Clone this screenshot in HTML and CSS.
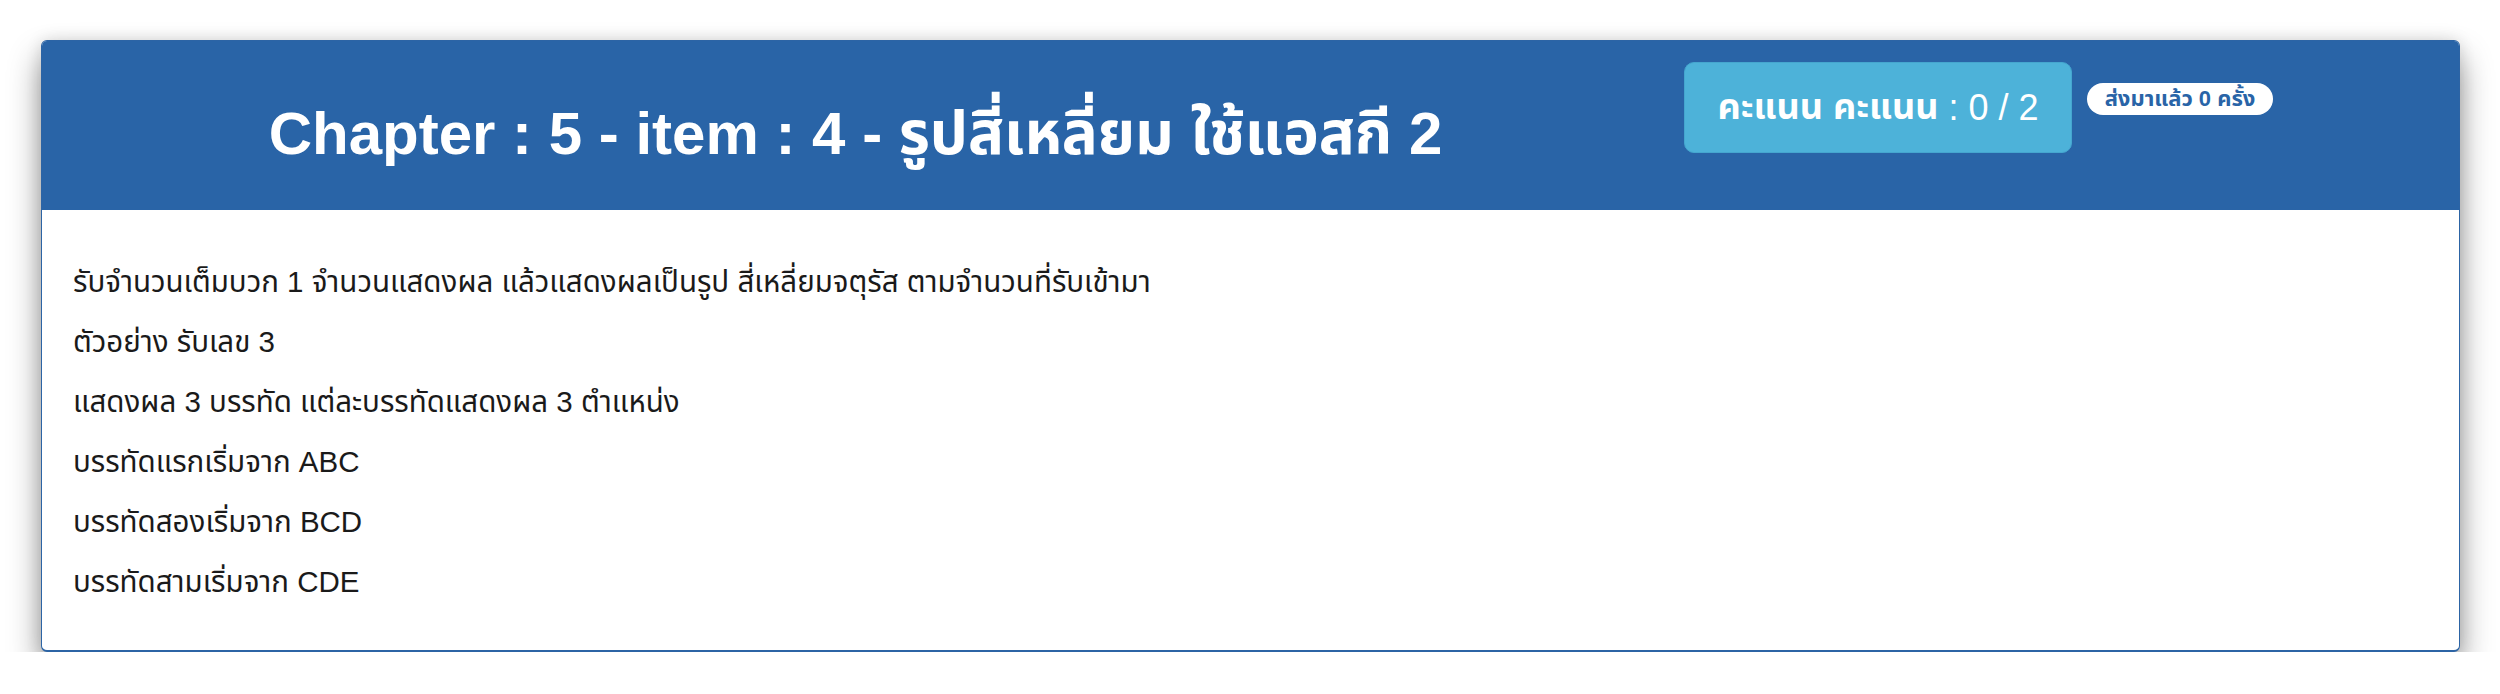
FILE: index.html
```html
<!DOCTYPE html>
<html lang="th">
<head>
<meta charset="utf-8">
<title>Chapter 5 - item 4</title>
<link rel="stylesheet" href="styles.css">
</head>
<body>
<div class="card">
  <div class="card-header">
    <h1 class="title">Chapter : 5 - item : 4 - รูปสี่เหลี่ยม ใช้แอสกี 2</h1>
    <div class="score"><span class="score-label">คะแนน คะแนน</span>&nbsp;: 0 / 2</div>
    <span class="badge">ส่งมาแล้ว 0 ครั้ง</span>
  </div>
  <div class="card-body">
    <p>รับจำนวนเต็มบวก 1 จำนวนแสดงผล แล้วแสดงผลเป็นรูป สี่เหลี่ยมจตุรัส ตามจำนวนที่รับเข้ามา</p>
    <p>ตัวอย่าง รับเลข 3</p>
    <p>แสดงผล 3 บรรทัด แต่ละบรรทัดแสดงผล 3 ตำแหน่ง</p>
    <p>บรรทัดแรกเริ่มจาก ABC</p>
    <p>บรรทัดสองเริ่มจาก BCD</p>
    <p>บรรทัดสามเริ่มจาก CDE</p>
  </div>
</div>
</body>
</html>
```
FILE: styles.css
```css
html, body {
  margin: 0;
  padding: 0;
  background: #ffffff;
}
body {
  padding: 40px 40px 0 41px;
  font-family: "Liberation Sans", "Noto Sans Thai", "Noto Sans", "DejaVu Sans", sans-serif;
  color: #1a1a1a;
}
.card {
  width: 2419px;
  box-sizing: border-box;
  border: 1px solid #2c64a5;
  border-bottom-width: 2px;
  border-radius: 6px;
  background: #fff;
  box-shadow: 0 18px 32px rgba(0, 0, 0, 0.42), 0 0 16px rgba(0, 0, 0, 0.12);
  overflow: hidden;
}
.card-header {
  background: #2964a7;
  height: 169px;
  box-sizing: border-box;
  padding-top: 21px;
  display: grid;
  grid-template-columns: 1627px 388px auto;
  column-gap: 15px;
  align-items: start;
}
.title {
  margin: 39px 0 0;
  font-size: 60px;
  line-height: 66px;
  font-weight: 700;
  color: #fff;
  text-align: center;
  white-space: nowrap;
}
.score {
  height: 91px;
  box-sizing: border-box;
  background: #4db2d9;
  border: 1px solid #45a6cf;
  border-radius: 10px;
  color: #fff;
  font-size: 36px;
  display: flex;
  align-items: center;
  justify-content: center;
  white-space: nowrap;
}
.score-label {
  font-weight: 700;
}
.badge {
  justify-self: start;
  margin-top: 21px;
  height: 32px;
  box-sizing: border-box;
  width: 186px;
  border-radius: 16px;
  background: #fff;
  color: #2964a7;
  font-size: 22px;
  font-weight: 700;
  display: flex;
  align-items: center;
  justify-content: center;
  white-space: nowrap;
}
.card-body {
  padding: 54px 31px 26px;
}
.card-body p {
  margin: 0 0 24px;
  font-size: 29.5px;
  line-height: 36px;
}
```
